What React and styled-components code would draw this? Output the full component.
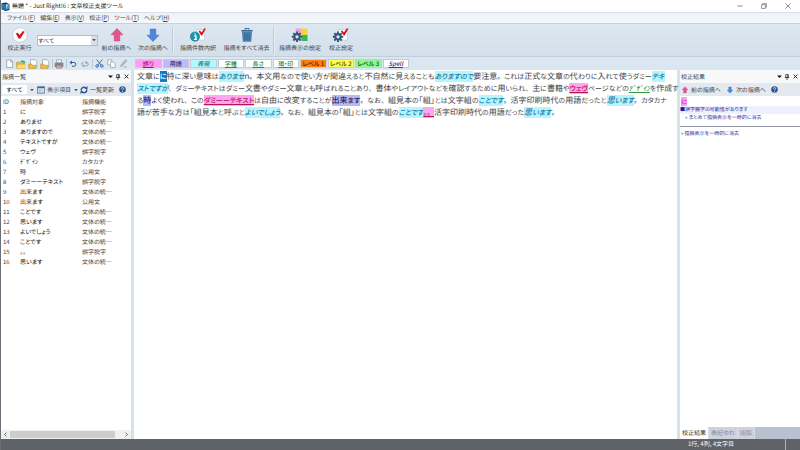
import React from 'react'
import styled, { createGlobalStyle } from 'styled-components'

const marks = {
    wrong: { bg: '#ffa6f0', fg: '#b8145c', line: true },
    term: { bg: '#b9b8f5', fg: '#26265c' },
    style: { bg: '#b4f6ff', fg: '#1f74a0', italic: true },
    kana: { bg: 'transparent', fg: '#2f9a3c', line: true, italic: true },
    selected: { bg: '#1878c8', fg: '#ffffff' },
}

const lines = [
    ['文章に', ['selected', 'に'], '特に深い意味は', ['style', 'ありませ'], 'n。本文用なので使い方が間違えると不自然に見えることも', ['style', 'ありますので'], '要注意。これは正式な文章の代わりに入れて使うダミー', ['style', 'テキ']],
    [['style', 'ストですが'], '、ダミーテキストはダミー文書やダミー文章とも呼ばれることあり、書体やレイアウトなどを確認するために用いられ、主に書籍や', ['wrong', 'ウェヴ'], 'ページなどの', ['kana', 'ﾃﾞｻﾞｲﾝ'], 'を作成す'],
    ['る', ['term', '時'], 'よく使われ、この', ['wrong', 'ダミーーテキスト'], 'は自由に改変することが', ['term', '出来ます'], '。なお、組見本の「組」とは文字組の', ['style', 'ことです'], '。活字印刷時代の用語だったと', ['style', '思います'], '。カタカナ'],
    ['語が苦手な方は「組見本と呼ぶと', ['style', 'よいでしょう'], '。なお、組見本の「組」とは文字組の', ['style', 'ことです'], ['wrong', '。。'], '活字印刷時代の用語だった', ['style', '思います'], '。'],
]

const findings = [
    ['に', '誤字脱字'],
    ['ありませ', '文体の統…'],
    ['ありますので', '文体の統…'],
    ['テキストですが', '文体の統…'],
    ['ウェヴ', '誤字脱字'],
    ['ﾃﾞｻﾞｲﾝ', 'カタカナ'],
    ['時', '公用文'],
    ['ダミーーテキスト', '誤字脱字'],
    ['出来ます', '文体の統…'],
    ['出来ます', '公用文'],
    ['ことです', '文体の統…'],
    ['思います', '文体の統…'],
    ['よいでしょう', '文体の統…'],
    ['ことです', '文体の統…'],
    ['。。', '誤字脱字'],
    ['思います', '文体の統…'],
]

const menus = [
    ['ファイル', 'F'],
    ['編集', 'E'],
    ['表示', 'V'],
    ['校正', 'P'],
    ['ツール', 'T'],
    ['ヘルプ', 'H'],
]

const chips = [
    { text: '誤り', bg: '#ff9df5', fg: '#b01050', line: true },
    { text: '用語', bg: '#bdb9fa', fg: '#2c2c70' },
    { text: '表現', bg: '#b4f8ff', fg: '#1a7a96', italic: true },
    { text: '字種', bg: '#ffffff', fg: '#2d8a2d', line: true },
    { text: '長さ', bg: '#ffffff', fg: '#2d8a2d', line: true },
    { text: '環・印', bg: '#ffffff', fg: '#2d8a2d', line: true },
    { text: 'レベル 1', bg: '#ff7f10', fg: '#402000' },
    { text: 'レベル 2', bg: '#ffff55', fg: '#404000' },
    { text: 'レベル 3', bg: '#90fa90', fg: '#104010' },
    { text: 'Spell', bg: '#ffffff', fg: '#4a2a9a', line: true, italic: true },
]

const Svg = ({ size = 8, children }) => (
    <svg width={size} height={size} viewBox='0 0 16 16' fill='none' aria-hidden='true'>{children}</svg>
)

const AppLogo = () => (
    <Svg size={9}>
        <path d='M1 2l8-1 6 3v10l-7 2-7-3z' fill='#16384f' />
        <path d='M2 3l5 1v10l-5-2z' fill='#2f7fae' />
        <path d='M8 4l6-1v9l-6 2z' fill='#4aa4d0' />
        <path d='M9 5l3 0-3 6z' fill='#d7eef8' />
    </Svg>
)

const CheckIcon = () => (
    <Svg size={16}>
        <circle cx='8' cy='8' r='7.4' fill='#fafbfc' stroke='#c3cbd3' strokeWidth='.8' />
        <path d='M3.8 6.6l2-.9 1.9 2.2 3.2-4 1.7.8-4.2 6.9-1.6.1z' fill='#d5121c' />
    </Svg>
)

const Arrow = ({ up, size = 16 }) => (
    <Svg size={size}>
        {up
            ? <path d='M8 1.5l6 6.3h-3.2V14H5.2V7.8H2z' fill='#e0558c' stroke='#c84078' strokeWidth='.5' />
            : <path d='M8 14.5l6-6.3h-3.2V2H5.2v6.2H2z' fill='#4f86dc' stroke='#3a6cc0' strokeWidth='.5' />}
    </Svg>
)

const InfoCheckIcon = () => (
    <Svg size={16}>
        <path d='M7 2.5h7.5V13H7z' fill='#fff' stroke='#bcc4cc' strokeWidth='.6' />
        <path d='M8.5 4.2l1.5-.6 1.5 1.8 3-4.2 1.3.6-3.7 6.7h-.9z' fill='#d5121c' />
        <circle cx='5' cy='9.6' r='4.7' fill='#1f93a8' stroke='#14708a' strokeWidth='.5' />
        <path d='M4.2 8.9h1.7v3.4M3.9 12.4h3M5.1 6.3v1.2' stroke='#fff' strokeWidth='1.3' />
    </Svg>
)

const TrashIcon = () => (
    <Svg size={16}>
        <path d='M3 4.8h10l-.8 10H3.8z' fill='#4b7fae' />
        <path d='M2.4 3h11.2v1.6H2.4z' fill='#3a6a98' />
        <path d='M6 2.8V1.5h4v1.3M5.7 6.5l.3 6.6M8 6.5v6.6M10.3 6.5l-.3 6.6' stroke='#35648f' strokeWidth='.9' />
    </Svg>
)

const Gear = () => (
    <g>
        <path d='M5 4.6v10.4M-.2 9.8h10.4M1.3 6.1l7.4 7.4M8.7 6.1l-7.4 7.4' stroke='#36587a' strokeWidth='1.9' />
        <circle cx='5' cy='9.8' r='3.7' fill='#36587a' />
        <circle cx='5' cy='9.8' r='1.6' fill='#e2ebf3' />
    </g>
)

const DisplayGearIcon = () => (
    <Svg size={16}>
        <path d='M3.5 1.5h6V8h-6z' fill='#f4a0d8' />
        <path d='M9.5 1.5h6V8h-6z' fill='#f0d63c' />
        <path d='M9.5 8h6v6h-6z' fill='#3fb45c' />
        <Gear />
    </Svg>
)

const CheckGearIcon = () => (
    <Svg size={16}>
        <path d='M5.5 2.5h9V13h-9z' fill='#fff' stroke='#bcc4cc' strokeWidth='.6' />
        <path d='M7.8 4.2l1.5-.6 1.6 1.8 3-4.2 1.5.6-3.8 6.7h-.9z' fill='#d5121c' />
        <Gear />
    </Svg>
)

const PageIcon = () => (
    <Svg size={9}><path d='M3 1.5h7L13.5 5v10H3z' fill='#fff' stroke='#6c7782' /><path d='M10 1.5V5h3.5' stroke='#6c7782' /></Svg>
)
const OpenIcon = () => (
    <Svg size={10}>
        <path d='M1 5h5l1.500 2H14v8H1z' fill='#e9b63a' stroke='#ad7c16' strokeWidth='.7' />
        <path d='M3.5 9H16l-2.5 6H1z' fill='#ffdc73' />
        <path d='M7 5c1-3 4-3 5-1.5v-2L15 5l-3 2.500v-2z' fill='#3aa64a' />
    </Svg>
)
const SaveIcon = () => (
    <Svg size={10}>
        <path d='M4 1h7l3 3v9H4z' fill='#fff' stroke='#7b8791' strokeWidth='.9' />
        <path d='M1 8h5l1 2h6v5H1z' fill='#efbc45' stroke='#ad7c16' strokeWidth='.7' />
    </Svg>
)
const PrintIcon = () => (
    <Svg size={10}>
        <path d='M4 1.5h8V6H4z' fill='#fff' stroke='#7a848e' />
        <path d='M1 6h14v6.5H1z' fill='#7f8892' />
        <path d='M3.5 10h9v4.5h-9z' fill='#f0a48c' stroke='#69727c' />
    </Svg>
)
const UndoIcon = () => (
    <Svg><path d='M3 5h7a3.7 3.7 0 010 7.5H6' stroke='#3b5d90' strokeWidth='2' /><path d='M6 1v8L1 5z' fill='#3b5d90' /></Svg>
)
const RedoIcon = () => (
    <Svg><path d='M7 12H5a3.5 3.5 0 010-7h1M9 12h2a3.5 3.5 0 000-7' stroke='#8793a2' strokeWidth='1.7' /><path d='M9 1.5v7L13 5zM7 8.5v6L4 12z' fill='#8793a2' /></Svg>
)
const CutIcon = () => (
    <Svg size={9}>
        <path d='M3 1l8 10M13 1L5 11' stroke='#4c5e74' strokeWidth='1.6' />
        <circle cx='3.8' cy='12.5' r='2.3' stroke='#2b68bd' strokeWidth='1.7' />
        <circle cx='12.2' cy='12.5' r='2.3' stroke='#2b68bd' strokeWidth='1.7' />
    </Svg>
)
const CopyIcon = () => (
    <Svg size={9}><path d='M1.5 1.5h7v9h-7z' fill='#fff' stroke='#7b8791' /><path d='M6.5 5.5h5l3 3V15h-8z' fill='#fff' stroke='#7b8791' /></Svg>
)
const PenIcon = () => (
    <Svg size={9}><path d='M12 1l2 2-8 9-3 1.5L4 10zM8 14h6' fill='#b9c2cb' stroke='#848f9a' /></Svg>
)
const ListIcon = () => (
    <Svg><path d='M1 1.5h14v13H1z' fill='#e8f0f8' stroke='#3d6494' strokeWidth='1.4' /><path d='M1 3h14' stroke='#3d6494' strokeWidth='3' /><path d='M3 7.5h10M3 10h10M3 12.5h10M5.5 6v8' stroke='#8ba8c9' /></Svg>
)
const RefreshIcon = () => (
    <Svg><path d='M2.5 9a5.5 5.5 0 019-5M13.5 7a5.5 5.5 0 01-9 5' stroke='#23549a' strokeWidth='2.8' /><path d='M9 5.500l6 .8V0zM7 10.500L1 9.700V16z' fill='#23549a' /></Svg>
)
const HelpIcon = () => (
    <Svg size={7}><circle cx='8' cy='8' r='7.5' fill='#28588e' /><path d='M5.5 6c0-3.3 5-3.3 5-.3 0 2-2.500 1.8-2.500 4M8 11.3v1.9' stroke='#fff' strokeWidth='1.8' /></Svg>
)
const CaretIcon = () => (
    <Svg size={4}><path d='M1 5h14l-7 7z' fill='#222' /></Svg>
)
const DownIcon = () => (
    <Svg size={5}><path d='M0 5h16l-8 8z' fill='#111' /></Svg>
)
const PinIcon = () => (
    <Svg size={6}><path d='M4.5 1.5h7V9h-7zM2 9.5h12M8 10v6M10 2v7' stroke='#222' strokeWidth='1.9' /></Svg>
)
const CloseIcon = () => (
    <Svg size={5}><path d='M2 2l12 12M14 2L2 14' stroke='#111' strokeWidth='2.8' /></Svg>
)
const MinIcon = () => (
    <Svg size={6}><path d='M1 8h14' stroke='#666' strokeWidth='2' /></Svg>
)
const RestoreIcon = () => (
    <Svg size={6}><path d='M1.5 4.5h10v10h-10zM4.5 4V1.5h10v10H12' stroke='#666' strokeWidth='1.8' /></Svg>
)
const WinCloseIcon = () => (
    <Svg size={6}><path d='M1 1l14 14M15 1L1 15' stroke='#555' strokeWidth='1.8' /></Svg>
)
const LeftIcon = () => (
    <Svg size={5}><path d='M11 2L5 8l6 6' stroke='#444' strokeWidth='2.5' /></Svg>
)
const RightIcon = () => (
    <Svg size={5}><path d='M5 2l6 6-6 6' stroke='#444' strokeWidth='2.5' /></Svg>
)

const PanelHeader = ({ title }) => (
    <PanelTitle>
        <h2>{title}</h2>
        <IconButton $w={8} aria-label='menu'><DownIcon /></IconButton>
        <IconButton $w={8} aria-label='pin'><PinIcon /></IconButton>
        <IconButton $w={8} aria-label='close'><CloseIcon /></IconButton>
    </PanelTitle>
)

// kana is set one size below kanji
const Script = ({ children }) => (
    children.split(/([ぁ-ヿｦ-ﾟ]+|[。、]+)/).filter(Boolean).map((run, i) => {
        if (/^[ぁ-ヿｦ-ﾟ]/.test(run)) return <Kana key={i}>{run}</Kana>
        if (/^[。、]/.test(run)) return <Stop key={i}>{run}</Stop>
        return run
    })
)

const App = () => {
    return (
        <Window>
            <GlobalStyle />
            <TitleBar>
                <AppLogo />
                <h1>無題 * - Just Right!6 : 文章校正支援ツール</h1>
                <IconButton $w={24} aria-label='minimize'><MinIcon /></IconButton>
                <IconButton $w={24} aria-label='restore'><RestoreIcon /></IconButton>
                <IconButton $w={24} aria-label='close'><WinCloseIcon /></IconButton>
            </TitleBar>
            <MenuBar>
                {menus.map(([name, key]) => (
                    <button key={key}>{name}(<u>{key}</u>)</button>
                ))}
            </MenuBar>
            <Ribbon>
                <RibbonButton $w={35}><CheckIcon />校正実行</RibbonButton>
                <SelectBox>
                    <select aria-label='指摘' defaultValue='すべて'>
                        <option>すべて</option>
                    </select>
                    <span><CaretIcon /></span>
                </SelectBox>
                <RibbonButton $w={37}><Arrow up />前の指摘へ</RibbonButton>
                <RibbonButton $w={36}><Arrow />次の指摘へ</RibbonButton>
                <RibbonLine />
                <RibbonButton $w={46}><InfoCheckIcon />指摘件数内訳</RibbonButton>
                <RibbonButton $w={51}><TrashIcon />指摘をすべて消去</RibbonButton>
                <RibbonLine />
                <RibbonButton $w={48}><DisplayGearIcon />指摘表示の設定</RibbonButton>
                <RibbonButton $w={34}><CheckGearIcon />校正設定</RibbonButton>
            </Ribbon>
            <ToolStrip>
                <Tools>
                    <IconButton $w={12} aria-label='new'><PageIcon /></IconButton>
                    <IconButton $w={12} aria-label='open'><OpenIcon /></IconButton>
                    <IconButton $w={12} aria-label='save'><SaveIcon /></IconButton>
                    <IconButton $w={12} aria-label='save as'><SaveIcon /></IconButton>
                    <ToolLine />
                    <IconButton $w={12} aria-label='print'><PrintIcon /></IconButton>
                    <ToolLine />
                    <IconButton $w={12} aria-label='undo'><UndoIcon /></IconButton>
                    <IconButton $w={12} aria-label='redo'><RedoIcon /></IconButton>
                    <ToolLine />
                    <IconButton $w={12} aria-label='cut'><CutIcon /></IconButton>
                    <IconButton $w={12} aria-label='copy'><CopyIcon /></IconButton>
                    <IconButton $w={12} aria-label='paste'><PenIcon /></IconButton>
                </Tools>
                <Chips>
                    {chips.map((c) => (
                        <Chip key={c.text} $bg={c.bg} $fg={c.fg} $line={c.line} $italic={c.italic}>{c.text}</Chip>
                    ))}
                </Chips>
            </ToolStrip>
            <Main>
                <ListPanel>
                    <PanelHeader title='指摘一覧' />
                    <PanelTools>
                        <FilterButton>すべて</FilterButton>
                        <IconButton $w={10} aria-label='filter'><CaretIcon /></IconButton>
                        <PanelButton><ListIcon />表示項目</PanelButton>
                        <IconButton $w={9} aria-label='columns'><CaretIcon /></IconButton>
                        <PanelButton><RefreshIcon />一覧更新</PanelButton>
                        <HelpButton aria-label='help'><HelpIcon /></HelpButton>
                    </PanelTools>
                    <Table>
                        <thead>
                            <tr><th>ID</th><th>指摘対象</th><th>指摘機能</th></tr>
                        </thead>
                        <tbody>
                            {findings.map(([target, kind], i) => (
                                <tr key={i}><td>{i + 1}</td><td>{target}</td><td>{kind}</td></tr>
                            ))}
                        </tbody>
                    </Table>
                    <ScrollBar>
                        <IconButton $w={9} aria-label='left'><LeftIcon /></IconButton>
                        <Thumb />
                        <IconButton $w={9} aria-label='right'><RightIcon /></IconButton>
                    </ScrollBar>
                </ListPanel>
                <Editor>
                    {lines.map((line, i) => (
                        <p key={i}>
                            {line.map((part, j) => (
                                typeof part === 'string'
                                    ? <Script key={j}>{part}</Script>
                                    : <Mark key={j} $kind={marks[part[0]]}><Script>{part[1]}</Script></Mark>
                            ))}
                        </p>
                    ))}
                </Editor>
                <ResultPanel>
                    <PanelHeader title='校正結果' />
                    <PanelTools>
                        <PanelButton><Arrow up size={8} />前の指摘へ</PanelButton>
                        <PanelButton><Arrow size={8} />次の指摘へ</PanelButton>
                        <HelpButton aria-label='help'><HelpIcon /></HelpButton>
                    </PanelTools>
                    <Word><span>に</span></Word>
                    <Reason>■誤字脱字の可能性があります</Reason>
                    <Action $indent><a href='#all'>» まとめて指摘表示を一時的に消去</a></Action>
                    <Divider />
                    <Action><a href='#one'>» 指摘表示を一時的に消去</a></Action>
                    <Tabs>
                        <Tab $active>校正結果</Tab>
                        <Tab>表記ゆれ</Tab>
                        <Tab>括弧</Tab>
                    </Tabs>
                </ResultPanel>
            </Main>
            <StatusBar>
                <span>1行, 4列, 4文字目</span>
            </StatusBar>
        </Window>
    )
}

const GlobalStyle = createGlobalStyle`
    *{
        box-sizing:border-box;
    }
    body{
        margin:0;
        font-family:"Noto Sans CJK JP", sans-serif;
        font-feature-settings:"palt";
        text-rendering:geometricPrecision;
        font-size:6px;
        line-height:10px;
        color:#444;
        background:#fff;
    }
    h1, h2, p{
        margin:0;
        font-size:inherit;
        font-weight:400;
    }
    button, select{
        margin:0;
        padding:0;
        border:0;
        background:none;
        font:inherit;
        font-feature-settings:inherit;
        text-rendering:inherit;
        color:inherit;
        white-space:nowrap;
    }
    svg{
        display:block;
        flex:none;
        overflow:visible;
    }
`;
const Window = styled.div`
    display:flex;
    flex-direction:column;
    min-height:100vh;
    border-left:1px solid #6a7078;
    white-space:nowrap;
`;
const IconButton = styled.button`
    display:flex;
    flex:none;
    align-items:center;
    justify-content:center;
    width:${(p) => p.$w}px;
`;
const TitleBar = styled.header`
    display:flex;
    align-items:center;
    height:12px;
    background:#fff;
    h1{
        flex:1;
        padding-left:2px;
        color:#222;
    }
`;
const MenuBar = styled.nav`
    display:flex;
    align-items:center;
    gap:5px;
    height:11px;
    padding-left:6px;
    background:linear-gradient(#eef3f8, #f4f8fb);
    border-top:1px solid #d9e0e8;
`;
const Ribbon = styled.div`
    display:flex;
    align-items:center;
    height:34px;
    padding-left:1px;
    background:linear-gradient(#dce7f1, #d3dfea);
    border-top:1px solid #c5d1dd;
    border-bottom:1px solid #c2cfda;
`;
const RibbonButton = styled.button`
    display:flex;
    flex-direction:column;
    align-items:center;
    width:${(p) => p.$w}px;
`;
const RibbonLine = styled.span`
    width:2px;
    height:26px;
    margin:0 1px;
    border-left:1px solid #bccad6;
    border-right:1px solid #e8eff5;
`;
const SelectBox = styled.div`
    display:flex;
    width:61px;
    height:11px;
    border:1px solid #b4bec9;
    background:#fff;
    select{
        flex:1;
        appearance:none;
        line-height:9px;
    }
    span{
        display:flex;
        align-items:center;
        padding:0 1px;
        background:#d9dfea;
    }
`;
const ToolStrip = styled.div`
    display:flex;
    align-items:center;
    height:13px;
    background:#dbe7f0;
`;
const Tools = styled.div`
    display:flex;
    align-items:center;
    width:134px;
    padding-left:2px;
`;
const ToolLine = styled.span`
    width:1px;
    height:9px;
    margin-left:1px;
    background:#b9c7d3;
`;
const Chips = styled.div`
    display:grid;
    grid-template-columns:repeat(10, 1fr);
    gap:1px;
    width:274px;
`;
const Chip = styled.button`
    height:9px;
    border:1px solid #c3ccd6;
    line-height:7px;
    background:${(p) => p.$bg};
    color:${(p) => p.$fg};
    font-weight:500;
    font-style:${(p) => (p.$italic ? 'italic' : 'normal')};
    text-decoration:${(p) => (p.$line ? 'underline' : 'none')};
`;
const Main = styled.main`
    display:flex;
    flex:1;
    background:#d5e2ee;
`;
const ListPanel = styled.section`
    display:flex;
    flex-direction:column;
    width:130px;
    background:#fff;
`;
const PanelTitle = styled.div`
    display:flex;
    align-items:center;
    height:13px;
    padding-right:1px;
    background:#f6f8fa;
    h2{
        flex:1;
        padding-left:1px;
    }
`;
const PanelTools = styled.div`
    display:flex;
    align-items:center;
    height:13px;
    margin-bottom:1px;
    padding:0 1px;
    background:#e4e9f0;
`;
const FilterButton = styled.button`
    width:25px;
    height:9px;
    background:#fff;
    line-height:9px;
    color:#222;
`;
const PanelButton = styled.button`
    display:flex;
    align-items:center;
    gap:2px;
    & + &{
        margin-left:5px;
    }
`;
const HelpButton = styled.button`
    margin-left:5px;
`;
const Table = styled.table`
    width:100%;
    table-layout:fixed;
    border-collapse:collapse;
    th, td{
        height:10px;
        padding:0 0 0 2px;
        line-height:10px;
        font-weight:400;
        text-align:left;
    }
    th:nth-child(1){
        width:17px;
    }
    th:nth-child(3){
        width:51px;
    }
    td:nth-child(2){
        color:#111;
    }
`;
const ScrollBar = styled.div`
    display:flex;
    height:9px;
    margin-top:auto;
    background:#f0f0f0;
`;
const Thumb = styled.span`
    width:105px;
    margin:1px 0;
    margin-right:auto;
    background:#cdcdcd;
`;
const Editor = styled.article`
    flex:1;
    min-width:0;
    margin:0 3px;
    padding:1px 3px;
    background:#fff;
    font-size:8px;
    line-height:12px;
    color:#444;
`;
const Kana = styled.span`
    font-size:7px;
`;
const Stop = styled.span`
    font-size:7px;
    font-feature-settings:normal;
`;
const Mark = styled.mark`
    background:${(p) => p.$kind.bg};
    color:${(p) => p.$kind.fg};
    font-style:${(p) => (p.$kind.italic ? 'italic' : 'normal')};
    font-weight:500;
    text-decoration:${(p) => (p.$kind.line ? 'underline' : 'none')};
`;
const ResultPanel = styled.section`
    display:flex;
    flex-direction:column;
    width:120px;
    background:#fff;
`;
const Word = styled.div`
    height:9px;
    padding-left:1px;
    line-height:9px;
    span{
        background:#ff9df5;
        color:#b01050;
    }
`;
const Reason = styled.p`
    background:#eef1fd;
    font-size:5px;
    line-height:8px;
    color:#1c1c9c;
`;
const Action = styled.p`
    padding-left:${(p) => (p.$indent ? 5 : 1)}px;
    font-size:5px;
    line-height:8px;
    a{
        color:#2c2c9c;
        text-decoration:none;
    }
`;
const Divider = styled.div`
    height:1px;
    margin:4px 0 3px;
    background:#9499a8;
`;
const Tabs = styled.div`
    display:flex;
    height:12px;
    margin-top:auto;
    background:#b9c0d0;
`;
const Tab = styled.button`
    padding:0 2px;
    border-right:1px solid #d8dce6;
    background:${(p) => (p.$active ? '#fff' : '#cdd2dd')};
    color:${(p) => (p.$active ? '#333' : '#858c9c')};
`;
const StatusBar = styled.footer`
    display:flex;
    justify-content:flex-end;
    height:11px;
    background:#5f6368;
    color:#fff;
    span{
        width:98px;
        margin-right:14px;
        border-right:1px solid #aeb2b6;
    }
`;

export default App
